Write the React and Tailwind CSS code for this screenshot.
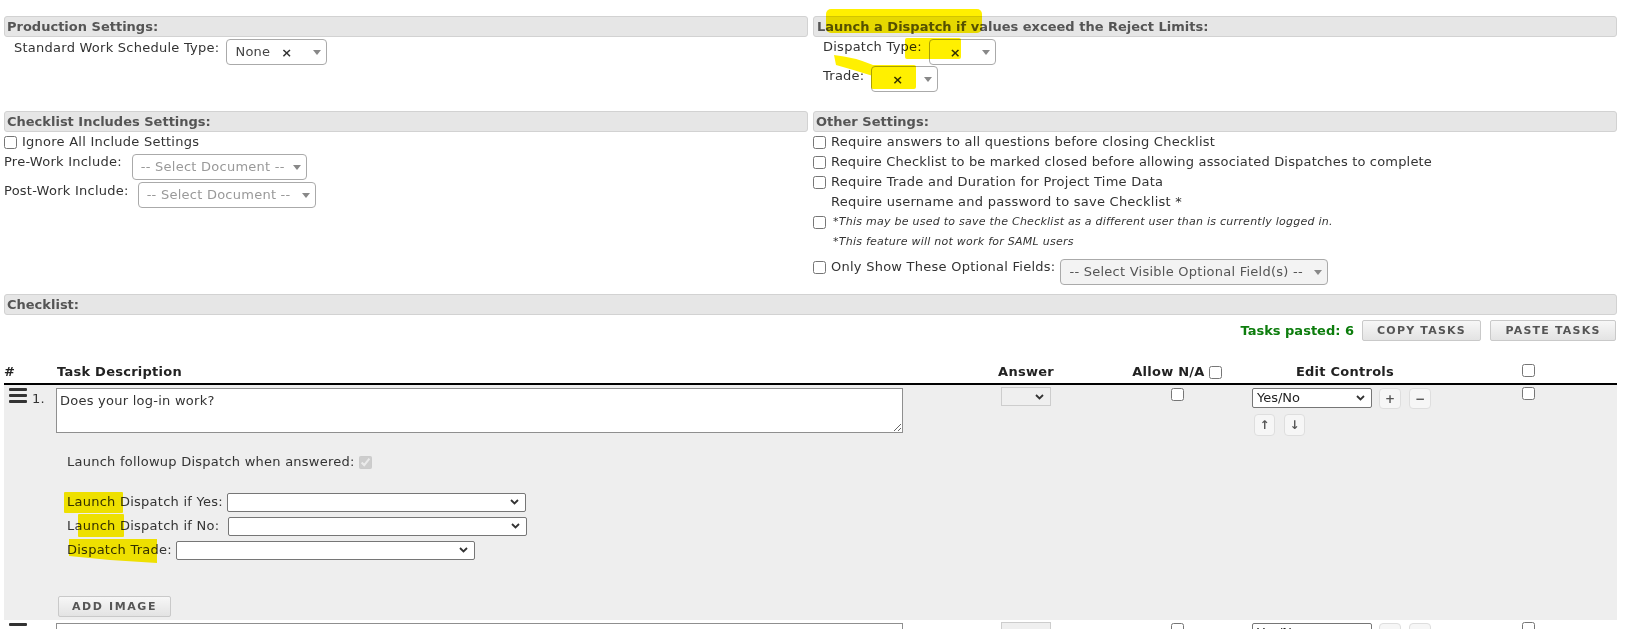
import React from "react";

const Chevron = ({ color = "#333" }) => (
	<svg width="9" height="6" viewBox="0 0 9 6" className="shrink-0">
		<path d="M1 1l3.5 3.5L8 1" fill="none" stroke={color} strokeWidth="1.8" />
	</svg>
);

const Triangle = () => (
	<span className="h-0 w-0 shrink-0 border-x-[4px] border-t-[5px] border-x-transparent border-t-[#888]" />
);

// select2-looking box
const Select2 = ({ value, placeholder, clearable, gray, className = "" }) => (
	<div
		className={`flex h-[26px] shrink-0 items-center rounded-[4px] border border-[#aaa] pl-[8px] pr-[5px] ${
			gray ? "bg-[#f3f3f3]" : "bg-white"
		} ${className}`}
	>
		<span className={`flex-1 whitespace-nowrap ${value ? "text-[#444]" : gray ? "text-[#555]" : "text-[#999]"}`}>
			{value || placeholder}
		</span>
		{clearable && <span className="mr-[21px] text-[13px] font-bold leading-none text-[#333]">×</span>}
		<Triangle />
	</div>
);

const NativeSelect = ({ children, muted, className = "" }) => (
	<div
		className={`flex shrink-0 items-center justify-between pl-[4px] pr-[6px] ${
			muted ? "border border-[#cdcdcd] bg-[#efefef]" : "rounded-[2px] border border-[#767676] bg-white"
		} ${className}`}
	>
		<span className="whitespace-nowrap text-[#222]">{children}</span>
		<Chevron />
	</div>
);

const Check = ({ className = "", ...rest }) => (
	<input type="checkbox" className={`m-0 h-[13px] w-[13px] shrink-0 ${className}`} {...rest} />
);

const SectionHeader = ({ children, className = "" }) => (
	<div
		className={`h-[21px] rounded-[3px] border border-[#d2d2d2] bg-[#e6e6e6] pl-[2px] text-[13px] font-bold leading-[19px] tracking-normal text-[#555] ${className}`}
	>
		{children}
	</div>
);

const GrayButton = ({ children, className = "" }) => (
	<button
		className={`h-[21px] rounded-[2px] border border-[#c9c9c9] bg-gradient-to-b from-[#f7f7f7] to-[#e3e3e3] text-[11px] font-bold leading-none tracking-[1.2px] text-[#555] ${className}`}
	>
		{children}
	</button>
);

const TinyButton = ({ children, className = "" }) => (
	<button
		className={`flex items-center justify-center rounded-[4px] border border-[#dedede] bg-[#f6f6f6] text-[12px] font-bold leading-none tracking-normal text-[#555] ${className}`}
	>
		{children}
	</button>
);

const Hamburger = () => (
	<div className="flex w-[18px] flex-col gap-[3px]">
		<span className="h-[3px] rounded-[1px] bg-[#333]" />
		<span className="h-[3px] rounded-[1px] bg-[#333]" />
		<span className="h-[3px] rounded-[1px] bg-[#333]" />
	</div>
);

const cols = "grid grid-cols-[52px_892px_156px_146px_190px_1fr]";

const TaskRow = ({ n, text, expanded }) => (
	<div className={`${cols} ${expanded ? "bg-[#eeeeee]" : "bg-white"}`}>
		<div className="flex items-start gap-[5px] pl-[5px] pt-[3px]">
			<Hamburger />
			<span className="mt-[1px] leading-[20px]">{n}.</span>
		</div>
		<div className="pt-[3px] pb-[3px]">
			<textarea
				className="block h-[45px] w-[847px] border border-[#8f8f8f] bg-white px-[3px] py-[2px] leading-[20px] text-[#333]"
				defaultValue={text}
			/>
			{expanded && (
				<>
					<div className="mt-[19px] flex h-[20px] items-center gap-[4px] pl-[11px]">
						<span>Launch followup Dispatch when answered:</span>
						<Check disabled defaultChecked />
					</div>
					<div className="mt-[18px] pl-[11px]">
						<div className="flex h-[24px] items-center gap-[4px]">
							<span>Launch Dispatch if Yes:</span>
							<NativeSelect className="h-[19px] w-[299px]" />
						</div>
						<div className="flex h-[24px] items-center gap-[9px]">
							<span>Launch Dispatch if No:</span>
							<NativeSelect className="h-[19px] w-[299px]" />
						</div>
						<div className="flex h-[24px] items-center gap-[4px]">
							<span>Dispatch Trade:</span>
							<NativeSelect className="h-[19px] w-[299px]" />
						</div>
					</div>
					<GrayButton className="ml-[2px] mt-[34px] w-[113px] tracking-[1.6px]">ADD IMAGE</GrayButton>
				</>
			)}
		</div>
		<div className="flex justify-center pt-[2px]">
			<NativeSelect muted className="h-[19px] w-[50px]" />
		</div>
		<div className="flex justify-center pt-[3px]">
			<Check />
		</div>
		<div className="pl-[2px] pt-[3px]">
			<div className="flex items-start">
				<NativeSelect className="h-[20px] w-[120px] tracking-normal">Yes/No</NativeSelect>
				<TinyButton className="ml-[7px] h-[21px] w-[22px]">+</TinyButton>
				<TinyButton className="ml-[8px] h-[21px] w-[22px]">−</TinyButton>
			</div>
			<div className="mt-[5px] flex">
				<TinyButton className="ml-[2px] h-[22px] w-[21px] text-[11px]">↑</TinyButton>
				<TinyButton className="ml-[9px] h-[22px] w-[21px] text-[11px]">↓</TinyButton>
			</div>
		</div>
		<div className="flex justify-center pt-[2px]">
			<Check />
		</div>
	</div>
);

export default function App() {
	return (
		<div className="relative h-[629px] overflow-hidden bg-white pl-[4px] pr-[10px] pt-[16px] font-['DejaVu_Sans',Verdana,sans-serif] text-[13px] leading-[20px] tracking-[0.25px] text-[#333]">
			{/* top settings */}
			<div className="grid grid-cols-2 gap-x-[5px]">
				<section>
					<SectionHeader>Production Settings:</SectionHeader>
					<div className="flex items-start gap-[7px] pl-[10px]">
						<span className="mt-[1px]">Standard Work Schedule Type:</span>
						<Select2 value="None" clearable className="mt-[2px] w-[101px]" />
					</div>
				</section>
				<section>
					<SectionHeader className="pl-[3px]">Launch a Dispatch if values exceed the Reject Limits:</SectionHeader>
					<div className="pl-[10px]">
						<div className="flex items-start gap-[7px]">
							<span>Dispatch Type:</span>
							<Select2 clearable className="mt-[2px] w-[67px]" />
						</div>
						<div className="mt-[1px] flex items-start gap-[7px]">
							<span>Trade:</span>
							<Select2 clearable className="w-[67px]" />
						</div>
					</div>
				</section>
			</div>

			<div className="mt-[19px] grid grid-cols-2 gap-x-[5px]">
				<section>
					<SectionHeader>Checklist Includes Settings:</SectionHeader>
					<label className="flex h-[20px] items-center gap-[5px]">
						<Check />
						<span>Ignore All Include Settings</span>
					</label>
					<div className="flex items-start gap-[10px]">
						<span>Pre-Work Include:</span>
						<Select2 placeholder="-- Select Document --" className="mt-[2px] w-[175px]" />
					</div>
					<div className="flex items-start gap-[9px]">
						<span className="mt-[1px]">Post-Work Include:</span>
						<Select2 placeholder="-- Select Document --" className="mt-[2px] w-[178px]" />
					</div>
				</section>
				<section>
					<SectionHeader>Other Settings:</SectionHeader>
					<label className="flex h-[20px] items-center gap-[5px]">
						<Check />
						<span>Require answers to all questions before closing Checklist</span>
					</label>
					<label className="flex h-[20px] items-center gap-[5px]">
						<Check />
						<span className="tracking-[0.18px]">
							Require Checklist to be marked closed before allowing associated Dispatches to complete
						</span>
					</label>
					<label className="flex h-[20px] items-center gap-[5px]">
						<Check />
						<span>Require Trade and Duration for Project Time Data</span>
					</label>
					<div className="h-[20px] pl-[18px]">Require username and password to save Checklist *</div>
					<label className="flex h-[20px] items-center gap-[7px]">
						<Check />
						<span className="text-[11px] italic">
							*This may be used to save the Checklist as a different user than is currently logged in.
						</span>
					</label>
					<div className="h-[20px] pl-[20px] text-[11px] italic">*This feature will not work for SAML users</div>
					<div className="flex items-start gap-[5px] pt-[5px]">
						<label className="flex h-[20px] items-center gap-[5px]">
							<Check />
							<span>Only Show These Optional Fields:</span>
						</label>
						<Select2 gray placeholder="-- Select Visible Optional Field(s) --" className="mt-[2px] w-[268px]" />
					</div>
				</section>
			</div>

			{/* checklist */}
			<SectionHeader className="mt-[9px]">Checklist:</SectionHeader>
			<div className="mt-[5px] flex h-[21px] items-center justify-end pr-[1px]">
				<span className="mr-[8px] font-bold tracking-normal text-[#0d7d0d]">Tasks pasted: 6</span>
				<GrayButton className="w-[119px]">COPY TASKS</GrayButton>
				<GrayButton className="ml-[9px] w-[126px]">PASTE TASKS</GrayButton>
			</div>

			<div className={`${cols} h-[44px] items-end border-b-2 border-black pb-[1px] font-bold text-[#222]`}>
				<span>#</span>
				<span className="pl-[1px]">Task Description</span>
				<span className="text-center">Answer</span>
				<div className="flex items-center justify-center gap-[4px]">
					<span>Allow N/A</span>
					<Check />
				</div>
				<span className="text-center">Edit Controls</span>
				<div className="flex justify-center pb-[5px]">
					<Check />
				</div>
			</div>

			<TaskRow n={1} text="Does your log-in work?" expanded />
			<TaskRow n={2} text="" />

			{/* yellow marker annotations */}
			<svg
				className="pointer-events-none absolute left-0 top-0 mix-blend-multiply"
				width="1627"
				height="629"
				viewBox="0 0 1627 629"
			>
				<g fill="#fff000">
					<rect x="826" y="9" width="156" height="24" rx="5" />
					<rect x="905" y="38" width="56" height="21" rx="2" />
					<path d="M834 55 Q854 57 873 65 L873 76 Q854 70 836 65 Z" />
					<rect x="871" y="65" width="45" height="24" rx="2" />
					<rect x="64" y="492" width="59" height="21" rx="1" />
					<rect x="78" y="514" width="46" height="23" rx="1" />
					<path d="M69 539 L157 539 L157 563 L110 560 L69 556 Z" />
				</g>
			</svg>
		</div>
	);
}
